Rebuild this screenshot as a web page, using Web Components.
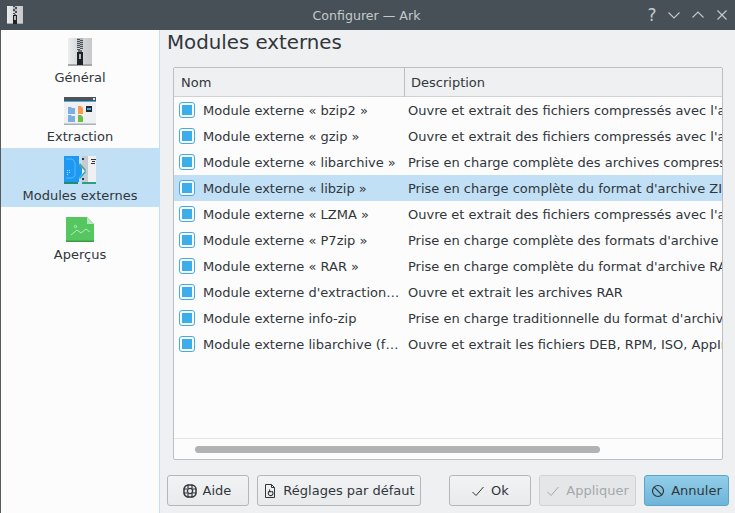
<!DOCTYPE html>
<html>
<head>
<meta charset="utf-8">
<title>Configurer — Ark</title>
<style>
  html, body { margin: 0; padding: 0; width: 735px; height: 513px; overflow: hidden; }
  body { font-family: "DejaVu Sans", sans-serif; font-size: 13px; color: #31363b; background: #eff0f1; }
</style>
</head>
<body>
<config-dialog>
  <title-bar slot="title" heading="Configurer — Ark"></title-bar>
  <side-nav slot="nav">
    <side-item label="Général" icon="zip"></side-item>
    <side-item label="Extraction" icon="extract"></side-item>
    <side-item label="Modules externes" icon="plugins" selected></side-item>
    <side-item label="Aperçus" icon="preview"></side-item>
  </side-nav>
  <plugin-page slot="page" heading="Modules externes">
    <plugin-table>
      <plugin-row name="Module externe « bzip2 »" desc="Ouvre et extrait des fichiers compressés avec l'a"></plugin-row>
      <plugin-row name="Module externe « gzip »" desc="Ouvre et extrait des fichiers compressés avec l'a"></plugin-row>
      <plugin-row name="Module externe « libarchive »" desc="Prise en charge complète des archives compress"></plugin-row>
      <plugin-row name="Module externe « libzip »" desc="Prise en charge complète du format d'archive ZI" selected></plugin-row>
      <plugin-row name="Module externe « LZMA »" desc="Ouvre et extrait des fichiers compressés avec l'a"></plugin-row>
      <plugin-row name="Module externe « P7zip »" desc="Prise en charge complète des formats d'archive"></plugin-row>
      <plugin-row name="Module externe « RAR »" desc="Prise en charge complète du format d'archive RA"></plugin-row>
      <plugin-row name="Module externe d'extraction…" desc="Ouvre et extrait les archives RAR"></plugin-row>
      <plugin-row name="Module externe info-zip" desc="Prise en charge traditionnelle du format d'archive"></plugin-row>
      <plugin-row name="Module externe libarchive (f…" desc="Ouvre et extrait les fichiers DEB, RPM, ISO, AppIm"></plugin-row>
    </plugin-table>
    <button-bar slot="buttons">
      <dlg-button icon="help" style="width:82px;padding-right:2px">Aide</dlg-button>
      <dlg-button icon="defaults" style="width:164px;margin-left:8px">Réglages par défaut</dlg-button>
      <dlg-button icon="check" style="width:82px;margin-left:auto">Ok</dlg-button>
      <dlg-button icon="check" disabled style="width:97px;margin-left:8px">Appliquer</dlg-button>
      <dlg-button icon="cancel" focused style="width:85px;margin-left:8px">Annuler</dlg-button>
    </button-bar>
  </plugin-page>
</config-dialog>

<script>
// zip file icon, used in the title bar and in the side list
const zipSvg = (w, h) => `
  <svg width="${w}" height="${h}" viewBox="0 0 24 28" shape-rendering="crispEdges">
    <defs><linearGradient id="zg" x1="0" y1="0" x2="1" y2="0">
      <stop offset="0" stop-color="#eceded"/><stop offset=".45" stop-color="#d6d8d9"/><stop offset="1" stop-color="#c6c8ca"/>
    </linearGradient></defs>
    <rect width="24" height="28" fill="url(#zg)"/>
    <rect y="26" width="24" height="2" fill="#a4a7a9"/>
    <rect x="9" y="0" width="6" height="10" fill="#b4b7b9"/>
    <path d="M9 1h3v1H9zm3 1h3v1h-3zM9 3h3v1H9zm3 1h3v1h-3zM9 5h3v1H9zm3 1h3v1h-3zM9 7h3v1H9zm3 1h3v1h-3zM9 9h3v1H9zm3 1h3v1h-3zM9 11h3v1H9z" fill="#4b5056"/>
    <rect x="10" y="12" width="4" height="2" fill="#6b7075"/>
    <rect x="9" y="14" width="6" height="13" fill="#1f2326"/>
    <rect x="11" y="16" width="2" height="5" fill="#b4b7b9"/>
  </svg>`;

const icons = {
  zip: zipSvg(24, 28),
  extract: `
  <svg width="32" height="28" viewBox="0 0 32 28">
    <rect width="32" height="28" fill="#eff0f1"/>
    <rect width="32" height="4" fill="#4d5359"/>
    <rect x="29" y="1" width="2" height="2" fill="#dfe1e3"/>
    <rect y="4" width="32" height="1" fill="#3daee9"/>
    <rect y="26.5" width="32" height="1.5" fill="#a9b0b5"/>
    <path d="M4 10h3l1 1h3v6H4z" fill="#7cb0e4"/>
    <path d="M14 9h3l2 2v6h-5z" fill="#fb9a50"/>
    <rect x="22" y="9" width="6" height="6" fill="#25292c"/>
    <rect x="23" y="11" width="4" height="2" fill="#3daee9"/>
    <path d="M4 18h3l1 1h3v6H4z" fill="#7cb0e4"/>
    <path d="M14 18h3l2 2v5h-5z" fill="#6cbf3f"/>
  </svg>`,
  plugins: `
  <svg width="32" height="28" viewBox="0 0 32 28">
    <rect width="14" height="26" fill="#1d99f3"/>
    <path d="M14 0h1v8l5 7-5 7v4h-1z" fill="#1d99f3"/>
    <path d="M2 3h6l3 3v14l-3 2H2" fill="none" stroke="#58b9f5" stroke-width="1"/>
    <path d="M3 14h1v1H3zm0 2h1v1H3zm0 2h1v1H3zm2-4h1v1H5zm0 2h1v1H5z" fill="#bfe3fb"/>
    <rect y="26" width="14" height="2" fill="#1e8c78"/>
    <rect x="18" width="14" height="26" fill="#eff0f1"/>
    <path d="M18 0h6v26h-6v-5l3-5-3-6z" fill="#c6cbcf"/>
    <rect x="18" y="2" width="2" height="2" fill="#31363b"/>
    <rect x="18" y="22" width="2" height="2" fill="#31363b"/>
    <path d="M27 3h5v1h-5zm1 2h3v1h-3zm-1 2h4v1h-4z" fill="#31363b"/>
    <rect x="18" y="26" width="14" height="2" fill="#2e9f80"/>
    <path d="M16 7l6 7-1 1-6-6z" fill="#4f9f95"/>
    <path d="M15 22l6-7 1 1-6 7z" fill="#1ca9c9"/>
  </svg>`,
  preview: `
  <svg width="28" height="25" viewBox="0 0 28 25">
    <path d="M0 0h21l7 7v18H0z" fill="#55c660"/>
    <rect y="23.500" width="28" height="1.500" fill="#3c9a4b"/>
    <path d="M21 0l7 7h-7z" fill="#b6e8bc"/>
    <circle cx="9.500" cy="9.500" r="1.200" fill="none" stroke="#c4eec8" stroke-width=".8"/>
    <path d="M5 18l6-5 4 3 5-4 4 3" fill="none" stroke="#c4eec8" stroke-width=".9"/>
  </svg>`,
  help: `
  <svg width="14" height="14" viewBox="0 0 14 14" fill="none" stroke="#31363b">
    <rect x="1" y="1" width="12" height="12" rx="4.500" stroke-width="1.500"/>
    <circle cx="7" cy="7" r="2.600" stroke-width="1.300"/>
    <path d="M5 .5v4M9 .5v4M5 9.500v4M9 9.500v4M.5 5h4M.5 9h4M9.500 5h4M9.500 9h4" stroke-width="1.200"/>
  </svg>`,
  defaults: `
  <svg width="14" height="14" viewBox="0 0 14 14" fill="none" stroke="#31363b" stroke-width="1">
    <path d="M2.500 13.500v-13h6l3 3v10z"/>
    <path d="M8.500.5v3h3"/>
    <path d="M9 7.300a2.400 2.400 0 1 1-2.600-.1M6.600 5.600v2h2" stroke-width="1.100"/>
  </svg>`,
  check: `
  <svg width="14" height="14" viewBox="0 0 14 14" fill="none" stroke="currentColor" stroke-width="1">
    <path d="M1.500 8l3.500 3.500 7.500-8.500"/>
  </svg>`,
  cancel: `
  <svg width="14" height="14" viewBox="0 0 14 14" fill="none" stroke="currentColor" stroke-width="1.200">
    <circle cx="7" cy="7" r="5.500"/>
    <path d="M3.100 3.100l7.800 7.800"/>
  </svg>`
};

class ConfigDialog extends HTMLElement {
  connectedCallback() {
    this.attachShadow({ mode: 'open' });
    this.shadowRoot.innerHTML = `
      <style>
        :host { display: grid; width: 735px; height: 513px; grid-template-columns: 160px 1fr; grid-template-rows: 30px 1fr; background: #eff0f1; }
        .top { grid-column: 1 / 3; }
      </style>
      <div class="top"><slot name="title"></slot></div>
      <slot name="nav"></slot>
      <slot name="page"></slot>`;
  }
}

class TitleBar extends HTMLElement {
  connectedCallback() {
    this.attachShadow({ mode: 'open' });
    this.shadowRoot.innerHTML = `
      <style>
        :host { display: flex; align-items: center; height: 30px; background: #475057; color: #c5c9cc; padding-left: 7px; padding-right: 5px; box-sizing: border-box; }
        .ico { display: flex; width: 16px; height: 20px; flex: none; }
        h1 { flex: 1; margin: 0; font: 400 12.6px "DejaVu Sans", sans-serif; text-align: center; padding-left: 68px; }
        .btns { display: flex; gap: 8px; align-items: center; }
        .btns svg { display: block; }
        .q { width: 16px; text-align: center; font-size: 17px; line-height: 16px; margin-left: 2px; margin-right: -2px; }
      </style>
      <span class="ico">${zipSvg(16, 20)}</span>
      <h1>${this.getAttribute('heading')}</h1>
      <div class="btns">
        <span class="q">?</span>
        <svg width="16" height="16" viewBox="0 0 16 16" fill="none" stroke="#c5c9cc" stroke-width="1.100"><path d="M2.500 5.500L8 11l5.500-5.500"/></svg>
        <svg width="16" height="16" viewBox="0 0 16 16" fill="none" stroke="#c5c9cc" stroke-width="1.100"><path d="M2.500 10.500L8 5l5.500 5.500"/></svg>
        <svg width="16" height="16" viewBox="0 0 16 16" fill="none" stroke="#c5c9cc" stroke-width="1.200"><path d="M3.500 3.500l9 9M12.500 3.500l-9 9"/></svg>
      </div>`;
  }
}

class SideNav extends HTMLElement {
  connectedCallback() {
    this.attachShadow({ mode: 'open' });
    this.shadowRoot.innerHTML = `
      <style>
        :host { display: flex; flex-direction: column; height: 483px; background: #fcfcfc; box-sizing: border-box; border-left: 1px solid #555a5e; border-right: 1px solid #c2e0f5; }
      </style>
      <slot></slot>`;
  }
}

class SideItem extends HTMLElement {
  connectedCallback() {
    this.attachShadow({ mode: 'open' });
    const selected = this.hasAttribute('selected');
    this.shadowRoot.innerHTML = `
      <style>
        :host { display: block; height: 59px; background: ${selected ? '#c2e0f5' : 'transparent'}; }
        .ico { display: flex; height: 40px; align-items: center; justify-content: center; padding-top: 4px; box-sizing: border-box; }
        .lbl { text-align: center; line-height: 15px; color: #31363b; white-space: nowrap; }
      </style>
      <div class="ico">${icons[this.getAttribute('icon')]}</div>
      <div class="lbl">${this.getAttribute('label')}</div>`;
  }
}

class PluginPage extends HTMLElement {
  connectedCallback() {
    this.attachShadow({ mode: 'open' });
    this.shadowRoot.innerHTML = `
      <style>
        :host { display: flex; flex-direction: column; height: 483px; box-sizing: border-box; padding: 0 6px 7px 7px; }
        h2 { margin: 0; font: 400 19.8px/26px "DejaVu Sans", sans-serif; color: #31363b; height: 37px; }
        .tbl { flex: 1; display: flex; min-height: 0; margin: 0 6px 0 6px; }
        .bar { margin-top: 15px; }
      </style>
      <h2>${this.getAttribute('heading')}</h2>
      <div class="tbl"><slot></slot></div>
      <div class="bar"><slot name="buttons"></slot></div>`;
  }
}

class PluginTable extends HTMLElement {
  connectedCallback() {
    this.attachShadow({ mode: 'open' });
    this.shadowRoot.innerHTML = `
      <style>
        :host { display: flex; flex-direction: column; flex: 1; min-width: 0; box-sizing: border-box; background: #fcfcfc; border: 1px solid #bcbfc2; border-radius: 2px; overflow: hidden; }
        .head { display: grid; grid-template-columns: 231px 1fr; height: 29px; flex: none; background: #eff0f1; border-bottom: 1px solid #cfd1d3; box-sizing: border-box; line-height: 29px; }
        .head div { padding-left: 7px; }
        .head div:first-child { border-right: 1px solid #bcbfc2; }
        .head div:last-child { padding-left: 6px; }
        .rows { flex: 1; min-height: 0; }
        .hscroll { flex: none; height: 21px; border-top: 1px solid #e4e5e6; display: flex; align-items: center; padding-left: 21px; box-sizing: border-box; }
        .thumb { width: 405px; height: 7px; border-radius: 4px; background: #b0b2b4; }
      </style>
      <div class="head"><div>Nom</div><div>Description</div></div>
      <div class="rows"><slot></slot></div>
      <div class="hscroll"><div class="thumb"></div></div>`;
  }
}

class PluginRow extends HTMLElement {
  connectedCallback() {
    this.attachShadow({ mode: 'open' });
    const selected = this.hasAttribute('selected');
    this.shadowRoot.innerHTML = `
      <style>
        :host { display: grid; grid-template-columns: 231px 1fr; height: 26px; line-height: 27px; white-space: nowrap; overflow: hidden; background: ${selected ? '#c2e0f5' : 'transparent'}; }
        .name { display: flex; align-items: center; padding-left: 5px; gap: 8px; overflow: hidden; }
        .box { flex: none; width: 16px; height: 16px; box-sizing: border-box; border: 1px solid #3daee9; border-radius: 3px; background: #fcfcfc; padding: 2px; }
        .box i { display: block; width: 10px; height: 10px; background: #3daee9; }
        .desc { padding-left: 3px; overflow: hidden; }
      </style>
      <div class="name"><span class="box"><i></i></span><span>${this.getAttribute('name')}</span></div>
      <div class="desc">${this.getAttribute('desc')}</div>`;
  }
}

class ButtonBar extends HTMLElement {
  connectedCallback() {
    this.attachShadow({ mode: 'open' });
    this.shadowRoot.innerHTML = `
      <style>:host { display: flex; height: 31px; }</style>
      <slot></slot>`;
  }
}

class DlgButton extends HTMLElement {
  connectedCallback() {
    this.attachShadow({ mode: 'open' });
    const disabled = this.hasAttribute('disabled');
    const focused = this.hasAttribute('focused');
    const bg = focused ? 'linear-gradient(#93cee9, #6fb4d8)' : 'linear-gradient(#f2f3f4, #e9eaeb)';
    const bd = focused ? '#5aa5cc' : '#b4b7ba';
    this.shadowRoot.innerHTML = `
      <style>
        :host { display: flex; box-sizing: border-box; height: 31px; align-items: center; justify-content: center; gap: 6px; border: 1px solid ${disabled ? '#cfd1d3' : bd}; border-radius: 3px; background: ${disabled ? '#e5e6e7' : bg}; color: ${disabled ? '#a5a8ab' : '#31363b'}; white-space: nowrap; flex: none; }
        svg { display: block; }
      </style>
      ${icons[this.getAttribute('icon')]}<slot></slot>`;
  }
}

customElements.define('config-dialog', ConfigDialog);
customElements.define('title-bar', TitleBar);
customElements.define('side-nav', SideNav);
customElements.define('side-item', SideItem);
customElements.define('plugin-page', PluginPage);
customElements.define('plugin-table', PluginTable);
customElements.define('plugin-row', PluginRow);
customElements.define('button-bar', ButtonBar);
customElements.define('dlg-button', DlgButton);
</script>
</body>
</html>
